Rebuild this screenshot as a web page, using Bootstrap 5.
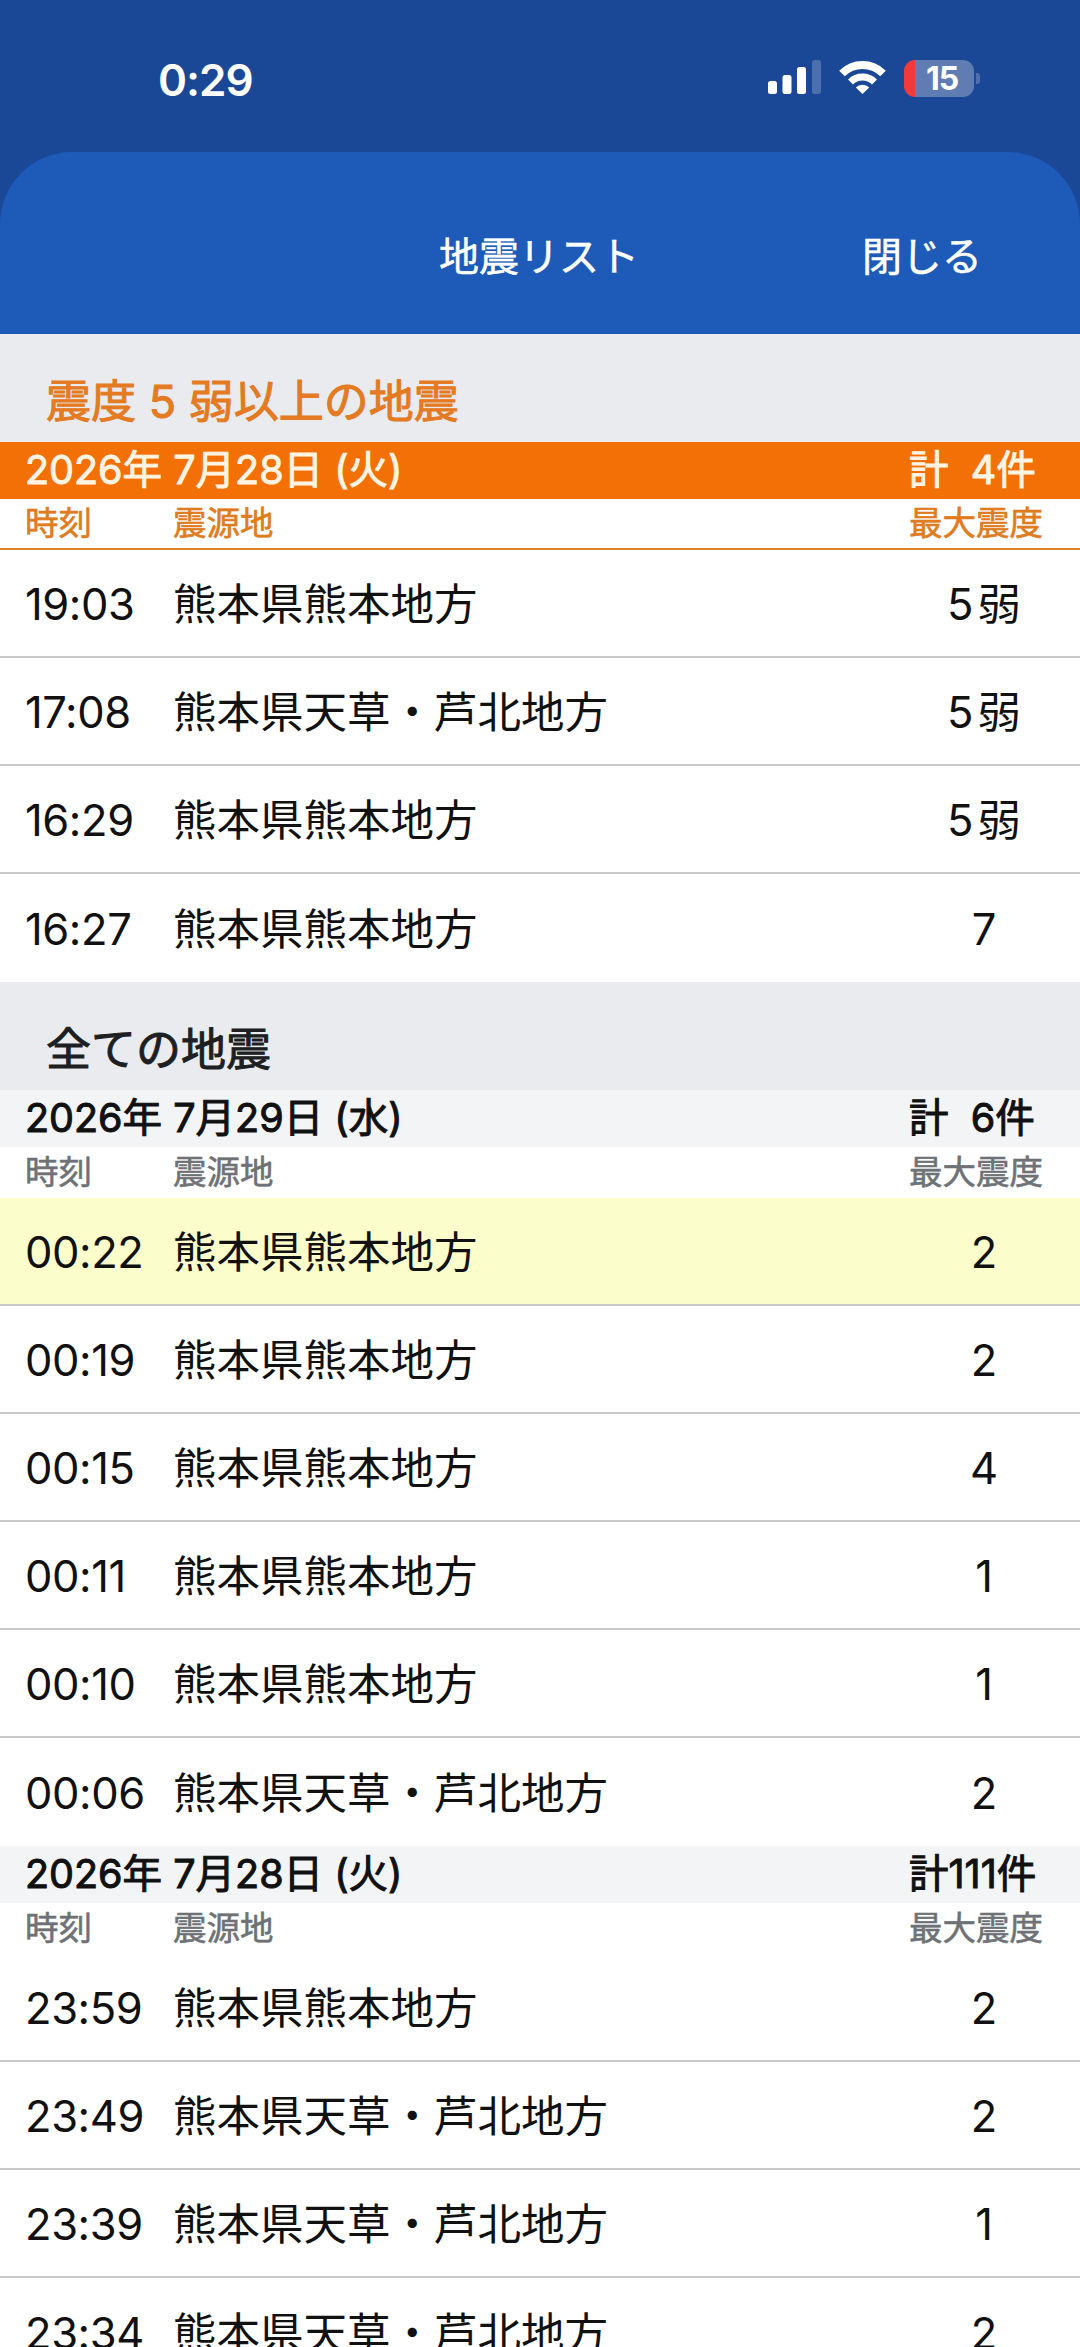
<!DOCTYPE html>
<html lang="ja">
<head>
<meta charset="utf-8">
<title>地震リスト</title>
<link href="https://cdn.jsdelivr.net/npm/bootstrap@5.3.0/dist/css/bootstrap.min.css" rel="stylesheet">
<style>
html,body{height:2347px;overflow:hidden}
body{background:#1a4796;font-family:Inter,"Noto Sans CJK JP",sans-serif;color:#111}
.statusbar{height:152px;padding:57px 100px 0 158px;color:#fff}
.clock{font-size:44px;line-height:46px;font-weight:600;letter-spacing:-1px}
.sicons{gap:18px;padding-top:3px}
.batt{width:70px;height:37px;border-radius:11px;background:linear-gradient(to right,#f23a3a 11px,#5f7db2 11px);color:#fff;font-size:32px;font-weight:700;line-height:37px;text-align:center;padding-left:6px;letter-spacing:-1px}
.nub{width:4px;height:11px;background:#4c6fae;border-radius:0 3px 3px 0;margin-left:2px}
.appnav{height:182px;background:#1e5bb9;border-radius:72px 72px 0 0;color:#fff;font-size:40px;font-weight:400;padding-top:28px;-webkit-text-stroke:.5px #fff}
.navtitle{margin-left:439px;width:423px}
.content{background:#fff}
.sechead{height:108px;background:#e9ebef;padding:0 0 10px 46px;font-size:45px;line-height:60px;font-weight:400;color:#1d1f22;-webkit-text-stroke:1px currentColor}
.sechead.alert-o{color:#e47a21}
.dateband{height:57px;background:#f3f4f6;font-size:39.5px;font-weight:400;padding-left:25px;color:#111;-webkit-text-stroke:1px currentColor}
.dateband.alert-o{background:#f37006;color:#fff3e2}
.colhead{height:51px;font-size:33.5px;font-weight:400;padding-left:25px;color:#6e7276;background:#fff;-webkit-text-stroke:.6px currentColor}
.colhead.alert-o{color:#e07b20;border-bottom:2px solid #e0802c}
.ctime{width:148px;flex:none}
.qrow .ctime{letter-spacing:-.4px}
.cplace{flex:1 1 auto;min-width:0}
.cmax{width:171px;flex:none;margin-left:auto}
.qlist{--bs-list-group-border-width:2px;--bs-list-group-border-color:#c9c9c9;--bs-list-group-color:#111;--bs-list-group-bg:#fff}
.qrow{height:108px;padding:2px 0 0 25px;font-size:43.5px;line-height:50px;font-weight:400}
.qrow .cmax{text-align:center;width:150px;margin-right:21px}
.qrow.hit{background:#fbfdca}
</style>
</head>
<body>
<header class="statusbar d-flex justify-content-between align-items-start">
  <div class="clock">0:29</div>
  <div class="sicons d-flex align-items-start">
    <svg width="53" height="34" viewBox="0 0 53 34" aria-hidden="true">
      <rect x="0" y="21" width="9" height="13" rx="2.5" fill="#fff"/>
      <rect x="14.5" y="15" width="9" height="19" rx="2.5" fill="#fff"/>
      <rect x="29" y="7" width="9" height="27" rx="2.5" fill="#fff"/>
      <rect x="44" y="0" width="9" height="34" rx="2.5" fill="#4c6fae"/>
    </svg>
    <svg width="47" height="34" viewBox="0 0 47 34" aria-hidden="true">
      <path d="M3 13.5A29 29 0 0 1 44 13.5" fill="none" stroke="#fff" stroke-width="8"/>
      <path d="M11.5 22A17 17 0 0 1 35.5 22" fill="none" stroke="#fff" stroke-width="7"/>
      <path d="M23.5 34L16.8 27.5A9.5 9.5 0 0 1 30.2 27.5Z" fill="#fff"/>
    </svg>
    <div class="d-flex align-items-center">
      <div class="batt">15</div>
      <div class="nub"></div>
    </div>
  </div>
</header>

<nav class="appnav d-flex align-items-center">
  <div class="navtitle">地震リスト</div>
  <div>閉じる</div>
</nav>

<main class="content">
  <h2 class="sechead alert-o d-flex align-items-end m-0">震度 5 弱以上の地震</h2>
  <div class="dateband alert-o d-flex align-items-center">
    <div class="cplace">2026年 7月28日 (火)</div><div class="cmax">計&nbsp; 4件</div>
  </div>
  <div class="colhead alert-o d-flex align-items-center">
    <div class="ctime">時刻</div><div class="cplace">震源地</div><div class="cmax">最大震度</div>
  </div>
  <div class="list-group list-group-flush qlist rounded-0">
    <div class="list-group-item qrow d-flex align-items-center"><div class="ctime">19:03</div><div class="cplace">熊本県熊本地方</div><div class="cmax">5&#8202;弱</div></div>
    <div class="list-group-item qrow d-flex align-items-center"><div class="ctime">17:08</div><div class="cplace">熊本県天草・芦北地方</div><div class="cmax">5&#8202;弱</div></div>
    <div class="list-group-item qrow d-flex align-items-center"><div class="ctime">16:29</div><div class="cplace">熊本県熊本地方</div><div class="cmax">5&#8202;弱</div></div>
    <div class="list-group-item qrow d-flex align-items-center"><div class="ctime">16:27</div><div class="cplace">熊本県熊本地方</div><div class="cmax">7</div></div>
  </div>

  <h2 class="sechead d-flex align-items-end m-0">全ての地震</h2>
  <div class="dateband d-flex align-items-center">
    <div class="cplace">2026年 7月29日 (水)</div><div class="cmax">計&nbsp; 6件</div>
  </div>
  <div class="colhead d-flex align-items-center">
    <div class="ctime">時刻</div><div class="cplace">震源地</div><div class="cmax">最大震度</div>
  </div>
  <div class="list-group list-group-flush qlist rounded-0">
    <div class="list-group-item qrow hit d-flex align-items-center"><div class="ctime">00:22</div><div class="cplace">熊本県熊本地方</div><div class="cmax">2</div></div>
    <div class="list-group-item qrow d-flex align-items-center"><div class="ctime">00:19</div><div class="cplace">熊本県熊本地方</div><div class="cmax">2</div></div>
    <div class="list-group-item qrow d-flex align-items-center"><div class="ctime">00:15</div><div class="cplace">熊本県熊本地方</div><div class="cmax">4</div></div>
    <div class="list-group-item qrow d-flex align-items-center"><div class="ctime">00:11</div><div class="cplace">熊本県熊本地方</div><div class="cmax">1</div></div>
    <div class="list-group-item qrow d-flex align-items-center"><div class="ctime">00:10</div><div class="cplace">熊本県熊本地方</div><div class="cmax">1</div></div>
    <div class="list-group-item qrow d-flex align-items-center"><div class="ctime">00:06</div><div class="cplace">熊本県天草・芦北地方</div><div class="cmax">2</div></div>
  </div>

  <div class="dateband d-flex align-items-center">
    <div class="cplace">2026年 7月28日 (火)</div><div class="cmax">計111件</div>
  </div>
  <div class="colhead d-flex align-items-center">
    <div class="ctime">時刻</div><div class="cplace">震源地</div><div class="cmax">最大震度</div>
  </div>
  <div class="list-group list-group-flush qlist rounded-0">
    <div class="list-group-item qrow d-flex align-items-center"><div class="ctime">23:59</div><div class="cplace">熊本県熊本地方</div><div class="cmax">2</div></div>
    <div class="list-group-item qrow d-flex align-items-center"><div class="ctime">23:49</div><div class="cplace">熊本県天草・芦北地方</div><div class="cmax">2</div></div>
    <div class="list-group-item qrow d-flex align-items-center"><div class="ctime">23:39</div><div class="cplace">熊本県天草・芦北地方</div><div class="cmax">1</div></div>
    <div class="list-group-item qrow d-flex align-items-center"><div class="ctime">23:34</div><div class="cplace">熊本県天草・芦北地方</div><div class="cmax">2</div></div>
  </div>
</main>
<script src="https://cdn.jsdelivr.net/npm/bootstrap@5.3.0/dist/js/bootstrap.bundle.min.js"></script>
</body>
</html>
